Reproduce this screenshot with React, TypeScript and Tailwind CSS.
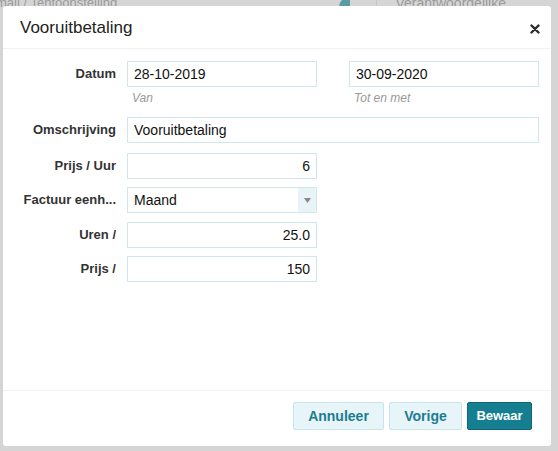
import React from 'react';

const font = { fontFamily: '"Liberation Sans", Arial, Helvetica, sans-serif' };

function Field({ value, align = 'left', className = '' }: { value: string; align?: 'left' | 'right'; className?: string }) {
  return (
    <div
      className={`h-[26px] border border-[#cfe6ef] bg-white px-[6px] flex items-center text-[14px] text-[#111] ${
        align === 'right' ? 'justify-end' : 'justify-start'
      } ${className}`}
    >
      {value}
    </div>
  );
}

function Label({ children }: { children: React.ReactNode }) {
  return (
    <div className="w-[96px] shrink-0 text-right text-[13px] font-bold text-[#333] whitespace-nowrap leading-[26px]">
      {children}
    </div>
  );
}

export default function App() {
  return (
    <div style={font} className="relative w-[558px] h-[451px] bg-[#d5d5d5] overflow-hidden">
      {/* page behind the dimmed overlay */}
      <div className="flex items-start h-[10px] -mt-[7px] text-[13px] text-[#9a9a9a]">
        <span className="ml-[-4px]">mail / Tentoonstelling</span>
        <div className="ml-auto mt-[4px] w-[11px] h-[14px] rounded-tl-[10px] bg-[#5a9aa3] mr-[26px]" />
        <div className="h-[20px] w-px bg-[#c6c6c6] mr-[18px]" />
        <span className="text-[14px] mr-[52px]">Verantwoordelijke</span>
      </div>

      <div className="absolute left-[3px] top-[6px] w-[548px] h-[440px] bg-white rounded-[3px] flex flex-col">
        <div className="h-[43px] shrink-0 flex items-center justify-between pl-[17px] pr-[10px] border-b border-[#eef2f2]">
          <span className="text-[17px] text-[#222] mt-[2px]">Vooruitbetaling</span>
          <svg width="10" height="10" viewBox="0 0 10 10" className="mr-[1px] mt-[3px]">
            <path d="M1.5 1.5 L8.5 8.5 M8.5 1.5 L1.5 8.5" stroke="#2a2a2a" strokeWidth="2.4" strokeLinecap="round" />
          </svg>
        </div>

        <div className="flex-1 pl-[17px] pt-[12px]">
          <div className="flex gap-[11px]">
            <Label>Datum</Label>
            <div className="flex gap-[32px]">
              <div className="w-[190px]">
                <Field value="28-10-2019" />
                <div className="mt-[3px] pl-[5px] text-[12px] italic text-[#999] leading-[16px]">Van</div>
              </div>
              <div className="w-[190px]">
                <Field value="30-09-2020" />
                <div className="mt-[3px] pl-[5px] text-[12px] italic text-[#999] leading-[16px]">Tot en met</div>
              </div>
            </div>
          </div>

          <div className="flex gap-[11px] mt-[11px]">
            <Label>Omschrijving</Label>
            <Field value="Vooruitbetaling" className="w-[412px]" />
          </div>

          <div className="flex gap-[11px] mt-[10px]">
            <Label>Prijs / Uur</Label>
            <Field value="6" align="right" className="w-[190px]" />
          </div>

          <div className="flex gap-[11px] mt-[8px]">
            <Label>Factuur eenh...</Label>
            <div className="w-[190px] h-[26px] border border-[#cfe6ef] flex text-[14px] text-[#111]">
              <div className="flex-1 flex items-center px-[6px]">Maand</div>
              <div className="w-[18px] bg-[#e8f4f8] flex items-center justify-center">
                <svg width="7" height="5" viewBox="0 0 7 5">
                  <path d="M0 0 L7 0 L3.5 5 Z" fill="#8a8a8a" />
                </svg>
              </div>
            </div>
          </div>

          <div className="flex gap-[11px] mt-[9px]">
            <Label>Uren /</Label>
            <Field value="25.0" align="right" className="w-[190px]" />
          </div>

          <div className="flex gap-[11px] mt-[8px]">
            <Label>Prijs /</Label>
            <Field value="150" align="right" className="w-[190px]" />
          </div>
        </div>

        <div className="h-[56px] shrink-0 border-t border-[#eef4f4] flex justify-end items-start gap-[5px] pt-[11px] pr-[19px]">
          <button className="w-[91px] h-[28px] rounded-[2px] border border-[#c5e4ec] bg-[#e7f4f8] text-[14px] font-bold text-[#1b7d90]">
            Annuleer
          </button>
          <button className="w-[73px] h-[28px] rounded-[2px] border border-[#c5e4ec] bg-[#e7f4f8] text-[14px] font-bold text-[#1b7d90]">
            Vorige
          </button>
          <button className="w-[65px] h-[28px] rounded-[2px] border border-[#0f6676] bg-[#157f91] text-[13px] font-bold text-white">
            Bewaar
          </button>
        </div>
      </div>
    </div>
  );
}
